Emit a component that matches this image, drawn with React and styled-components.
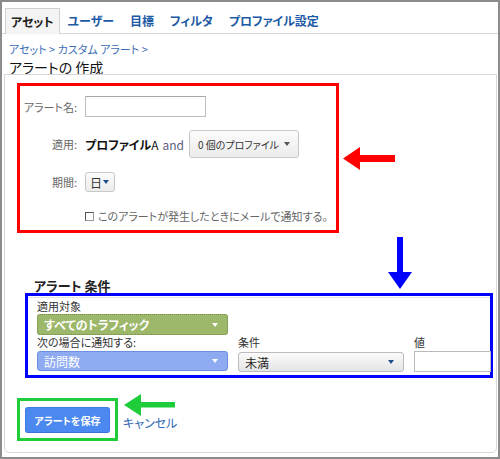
import styled, { createGlobalStyle } from "styled-components";

const GlobalStyle = createGlobalStyle`
  body {
    margin: 0;
    background: #fff;
    font-family: "Noto Sans CJK JP", "Noto Sans", sans-serif;
    font-feature-settings: "palt";
  }
`;

const Frame = styled.div`
  position: relative;
  width: 500px;
  height: 459px;
  box-sizing: border-box;
  border: 2px solid #8c8c8c;
  display: flex;
  flex-direction: column;
  overflow: hidden;
`;

const TabBar = styled.div`
  display: flex;
  align-items: flex-end;
  height: 26px;
  margin-top: 5px;
  padding-left: 3px;
  border-bottom: 1px solid #d6d6d6;
`;

const Tab = styled.div`
  height: ${p => (p.active ? "26px" : "25px")};
  box-sizing: border-box;
  display: flex;
  align-items: center;
  padding: 0 ${p => (p.active ? "5px" : "8px")};
  margin-bottom: ${p => (p.active ? "-1px" : "0")};
  font-size: 12px;
  font-weight: bold;
  color: ${p => (p.active ? "#222" : "#1d5aa6")};
  background: ${p => (p.active ? "#f4f4f4" : "transparent")};
  border: ${p => (p.active ? "1px solid #d0d0d0" : "none")};
  border-bottom: none;
`;

const Header = styled.div`
  padding: 0 7px;
`;

const Breadcrumb = styled.div`
  margin-top: 7px;
  font-size: 11px;
  line-height: 16px;
  color: #3a6db5;
`;

const Title = styled.h1`
  margin: 0 0 -3px;
  font-size: 14px;
  line-height: 20px;
  font-weight: normal;
  color: #111;
`;

const Panel = styled.div`
  flex: 1;
  margin: 0 1px 4px 2px;
  border: 1px solid #d6d6d6;
  border-radius: 0 0 5px 5px;
  padding: 8px 0 0 12px;
`;

const RedBox = styled.div`
  width: 322px;
  height: 150px;
  box-sizing: border-box;
  border: 3px solid #ff0000;
  padding: 10px 0 0 0;
  display: flex;
  flex-direction: column;
`;

const FormRow = styled.div`
  display: flex;
  align-items: center;
  margin-top: ${p => p.gap || 0}px;
`;

const Label = styled.div`
  width: 57px;
  margin-right: 8px;
  text-align: right;
  font-size: 11px;
  color: #666;
`;

const TextInput = styled.div`
  width: ${p => p.w}px;
  height: ${p => p.h}px;
  box-sizing: border-box;
  border: 1px solid #bdbdbd;
  border-top-color: #a8a8a8;
  background: #fff;
`;

const Profile = styled.span`
  font-size: 12px;
  color: #111;
  b {
    font-weight: bold;
  }
`;

const And = styled.span`
  margin-left: 4px;
  font-size: 12px;
  color: #5d5a80;
`;

const Caret = styled.span`
  width: 0;
  height: 0;
  border-left: 3px solid transparent;
  border-right: 3px solid transparent;
  border-top: 4px solid ${p => p.color || "#555"};
`;

const ButtonSelect = styled.div`
  width: ${p => p.w}px;
  height: ${p => p.h}px;
  box-sizing: border-box;
  margin-left: ${p => p.ml || 0}px;
  padding: 0 ${p => p.pr || 8}px 0 ${p => p.pl || 8}px;
  display: flex;
  align-items: center;
  justify-content: space-between;
  border: 1px solid #c8c8c8;
  border-radius: 3px;
  background: linear-gradient(#fbfbfb, #ececec);
  font-size: ${p => p.fs || 10}px;
  color: #333;
`;

const CheckRow = styled.div`
  display: flex;
  align-items: center;
  margin: 16px 0 0 65px;
  font-size: 11px;
  color: #666;
`;

const Check = styled.span`
  width: 9px;
  height: 9px;
  box-sizing: border-box;
  margin-right: 4px;
  border: 1px solid #999;
  border-top-color: #555;
  border-left-color: #555;
  background: #fff;
`;

const SectionTitle = styled.h2`
  margin: 46px 0 0 17px;
  font-size: 13px;
  line-height: 14px;
  font-weight: bold;
  color: #222;
`;

const BlueBox = styled.div`
  width: 468px;
  height: 85px;
  box-sizing: border-box;
  margin-left: 8px;
  border: 3px solid #0000ff;
`;

const Conditions = styled.div`
  margin-top: 1px;
  border-top: 1px solid #e2e2e2;
  padding: 2px 0 0 9px;
  display: grid;
  grid-template-columns: 191px 166px 77px;
  column-gap: 10px;
`;

const FieldLabel = styled.div`
  font-size: 11px;
  line-height: 12px;
  color: #333;
  margin-top: ${p => p.mt || 0}px;
`;

const ColorSelect = styled.div`
  height: ${p => p.h || 20}px;
  box-sizing: border-box;
  margin-top: ${p => p.mt || 0}px;
  padding: 0 9px 0 6px;
  display: flex;
  align-items: center;
  justify-content: space-between;
  border-radius: 3px;
  font-size: 12px;
  font-weight: ${p => (p.bold ? "bold" : "normal")};
  color: ${p => p.fg || "#fff"};
  background: ${p => p.bg};
  border: 1px ${p => p.line || "solid"} ${p => p.bc};
`;

const ValueInput = styled.div`
  height: 21px;
  margin-top: 3px;
  box-sizing: border-box;
  border: 1px solid #bbb;
  background: #fff;
`;

const Footer = styled.div`
  display: flex;
  align-items: center;
  margin-top: 20px;
`;

const GreenBox = styled.div`
  width: 101px;
  height: 43px;
  box-sizing: border-box;
  border: 3px solid #1fcc3a;
  padding: 6px 5px 5px 5px;
`;

const SaveButton = styled.div`
  width: 85px;
  height: 26px;
  box-sizing: border-box;
  display: flex;
  align-items: center;
  justify-content: center;
  border-radius: 3px;
  background: #4b88ef;
  border: 1px solid #3f7de6;
  border-bottom: 1px dotted #2c5fc0;
  color: #fff;
  font-size: 10px;
  font-weight: bold;
`;

const Cancel = styled.span`
  margin: 6px 0 0 5px;
  font-size: 12px;
  color: #2f67b5;
`;

const Annotations = styled.svg`
  position: absolute;
  left: -2px;
  top: -2px;
  width: 500px;
  height: 459px;
  pointer-events: none;
`;

export default function App() {
  return (
    <>
      <GlobalStyle />
      <Frame>
        <TabBar>
          <Tab active>アセット</Tab>
          <Tab>ユーザー</Tab>
          <Tab>目標</Tab>
          <Tab>フィルタ</Tab>
          <Tab>プロファイル設定</Tab>
        </TabBar>
        <Header>
          <Breadcrumb>アセット &gt; カスタム アラート &gt;</Breadcrumb>
          <Title>アラートの 作成</Title>
        </Header>
        <Panel>
          <RedBox>
            <FormRow>
              <Label>アラート名:</Label>
              <TextInput w={121} h={21} />
            </FormRow>
            <FormRow gap={13}>
              <Label>適用:</Label>
              <Profile>
                <b>プロファイル</b>A
              </Profile>
              <And>and</And>
              <ButtonSelect w={110} h={28} ml={5}>
                0 個のプロファイル
                <Caret />
              </ButtonSelect>
            </FormRow>
            <FormRow gap={14}>
              <Label>期間:</Label>
              <ButtonSelect w={30} h={20} pl={4} pr={5} fs={12}>
                日
                <Caret color="#1d4f91" />
              </ButtonSelect>
            </FormRow>
            <CheckRow>
              <Check />
              このアラートが発生したときにメールで通知する。
            </CheckRow>
          </RedBox>

          <SectionTitle>アラート 条件</SectionTitle>
          <BlueBox>
            <Conditions>
              <div>
                <FieldLabel>適用対象</FieldLabel>
                <ColorSelect mt={2} h={21} bold bg="#9db86a" bc="#6f8a3e" line="dotted">
                  すべてのトラフィック
                  <Caret color="#fff" />
                </ColorSelect>
              </div>
              <div />
              <div />
              <div>
                <FieldLabel mt={1}>次の場合に通知する:</FieldLabel>
                <ColorSelect mt={3} h={20} bg="#8eabf2" bc="#6d8fe0">
                  訪問数
                  <Caret color="#fff" />
                </ColorSelect>
              </div>
              <div>
                <FieldLabel mt={1}>条件</FieldLabel>
                <ColorSelect mt={4} h={20} fg="#222" bg="linear-gradient(#fbfbfb, #e4e4e4)" bc="#bbb">
                  未満
                  <Caret color="#1d4f91" />
                </ColorSelect>
              </div>
              <div>
                <FieldLabel mt={1}>値</FieldLabel>
                <ValueInput />
              </div>
            </Conditions>
          </BlueBox>

          <Footer>
            <GreenBox>
              <SaveButton>アラートを保存</SaveButton>
            </GreenBox>
            <Cancel>キャンセル</Cancel>
          </Footer>
        </Panel>

        <Annotations viewBox="0 0 500 459">
          <polygon
            fill="#ff0000"
            points="343,158.5 360,147 360,155 395,155 395,162 360,162 360,170"
          />
          <polygon
            fill="#0000ff"
            points="397,237 403,237 403,272 412,272 400,289 388,272 397,272"
          />
          <polygon
            fill="#1fcc3a"
            points="124,405 141,394 141,402 175,402 175,407.5 141,407.5 141,416"
          />
        </Annotations>
      </Frame>
    </>
  );
}
